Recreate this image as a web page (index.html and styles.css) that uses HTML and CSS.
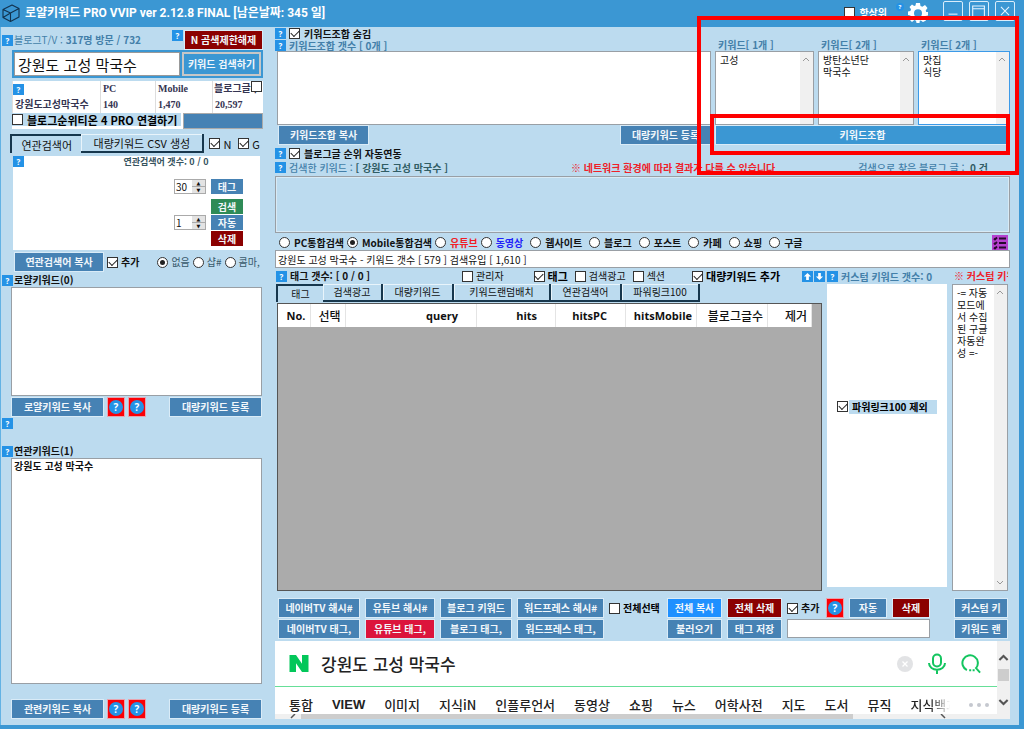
FILE: index.html
```html
<!DOCTYPE html>
<html lang="ko">
<head>
<meta charset="utf-8">
<title>로얄키워드 PRO VVIP</title>
<link rel="stylesheet" href="styles.css">
</head>
<body>
<header class="titlebar">
  <svg class="logo" viewBox="0 0 18 18" fill="none" stroke="#12324d" stroke-width="1.1" stroke-linejoin="round"><path d="M1 5.500 10 1l7 3.500v8.500L8.500 17.500 1 13.500zM1 5.500l7.500 3.500L17 4.500M8.500 9v8.500M1 13.500 8.500 9"/></svg>
  <h1 class="title">로얄키워드 PRO VVIP ver 2.12.8 FINAL [남은날짜: 345 일]</h1>
  <label class="check ontop"><input type="checkbox"> 항상위</label>
  <button class="help round">?</button>
  <button class="gear" aria-label="설정"><svg viewBox="0 0 20 20"><path fill="#fff" fill-rule="evenodd" d="M8 0h4l.5 3 1.800.8L17 2l2.500 3-1.800 2.500.5 1.500H20v3.500l-2.500.5-.8 1.800L18 17.500 15 19l-2.200-1.600-1 .4L11.500 20h-3l-.5-2.300-1.600-.6L4 19l-2.500-2.500L3 14l-.6-1.500L0 12V8.500L2.400 8 3 6.300 1.500 4 4 1.500l2.200 1.400L7.500 2.500zM10 6.200a4 4 0 1 0 0 8 4 4 0 0 0 0-8z"/></svg></button>
  <div class="window-buttons">
    <button aria-label="최소화"><svg viewBox="0 0 20 20"><path d="M5 13.500h10"/></svg></button>
    <button aria-label="최대화"><svg viewBox="0 0 20 20"><path d="M3 4.500h13v12H3zM3 7.500h13"/></svg></button>
    <button aria-label="닫기"><svg viewBox="0 0 20 20"><path d="M5.500 5.500l9 9M14.500 5.500l-9 9"/></svg></button>
  </div>
</header>

<main class="workspace">
  <aside class="side">
    <div class="visits">
      <button class="help">?</button>
      <span class="blue">블로그T/V : <b>317명 방문 / 732</b></span>
      <button class="help raise">?</button>
      <button class="btn dark">N 곰색제한해제</button>
    </div>
    <form class="search">
      <input class="search-text" type="text" value="강원도 고성 막국수" aria-label="키워드">
      <button type="button" class="btn bright">키워드 검색하기</button>
    </form>
    <section class="stats">
      <table>
        <tr><th><button class="help">?</button></th><th>PC</th><th>Mobile</th><th>블로그글수</th></tr>
        <tr><td>강원도고성막국수</td><td>140</td><td>1,470</td><td>20,597</td></tr>
      </table>
      <input class="stats-check" type="checkbox" aria-label="블로그글수">
      <div class="connect">
        <label class="check"><input type="checkbox"> 블로그순위티온 4 PRO 연결하기</label>
        <button class="btn" aria-label="연결"></button>
      </div>
    </section>
    <div class="side-tabs">
      <button class="tab on">연관검색어</button>
      <button class="tab">대량키워드 CSV 생성</button>
      <label class="check light"><input type="checkbox" checked> N</label>
      <label class="check light"><input type="checkbox" checked> G</label>
    </div>
    <section class="related">
      <div class="related-head"><button class="help">?</button><span>연관검색어 갯수: 0 / 0</span></div>
      <div class="related-controls">
        <div class="stepper"><input type="text" value="30" aria-label="태그 수"><span><button aria-label="증가">▲</button><button aria-label="감소">▼</button></span></div>
        <button class="btn">태그</button>
        <button class="btn green second">검색</button>
        <div class="stepper"><input type="text" value="1" aria-label="자동 수"><span><button aria-label="증가">▲</button><button aria-label="감소">▼</button></span></div>
        <button class="btn">자동</button>
        <button class="btn dark second">삭제</button>
      </div>
    </section>
    <div class="related-foot">
      <button class="btn">연관검색어 복사</button>
      <label class="check"><input type="checkbox" checked> 추가</label>
      <label class="check soft"><input type="radio" name="sep" checked> 없음</label>
      <label class="check soft"><input type="radio" name="sep"> 샵#</label>
      <label class="check soft"><input type="radio" name="sep"> 콤마,</label>
    </div>
    <div class="caption"><button class="help">?</button><label for="royal">로얄키워드(0)</label></div>
    <textarea class="list small" id="royal"></textarea>
    <div class="list-foot">
      <button class="btn">로얄키워드 복사</button>
      <button class="info"><i>?</i></button><button class="info"><i>?</i></button>
      <button class="btn last">대량키워드 등록</button>
    </div>
    <div class="caption"><button class="help">?</button></div>
    <div class="caption spaced"><button class="help">?</button><label for="rel">연관키워드(1)</label></div>
    <textarea class="list large" id="rel">강원도 고성 막국수</textarea>
    <div class="list-foot final">
      <button class="btn">관련키워드 복사</button>
      <button class="info"><i>?</i></button><button class="info"><i>?</i></button>
      <button class="btn last">대량키워드 등록</button>
    </div>
  </aside>

  <section class="content">
    <div class="combo">
      <div class="combo-head">
        <div class="line"><button class="help">?</button><label class="check"><input type="checkbox" checked> 키워드조합 숨김</label></div>
        <div class="line blue"><button class="help">?</button><span>키워드조합 갯수 [ 0개 ]</span></div>
      </div>
      <label class="blue" for="k1">키워드[ 1개 ]</label>
      <label class="blue" for="k2">키워드[ 2개 ]</label>
      <label class="blue" for="k3">키워드[ 2개 ]</label>
      <textarea class="box" aria-label="키워드조합"></textarea>
      <div class="box scrolled"><textarea id="k1">고성</textarea><span class="track"><svg viewBox="0 0 8 5"><path d="M1 4l3-3 3 3"/></svg></span></div>
      <div class="box scrolled"><textarea id="k2">방탄소년단
막국수</textarea><span class="track"><svg viewBox="0 0 8 5"><path d="M1 4l3-3 3 3"/></svg></span></div>
      <div class="box scrolled active"><textarea id="k3">맛집
식당</textarea><span class="track"><svg viewBox="0 0 8 5"><path d="M1 4l3-3 3 3"/></svg></span></div>
      <div class="combo-actions"><button class="btn">키워드조합 복사</button><button class="btn">대량키워드 등록</button></div>
      <button class="btn bright combine">키워드조합</button>
    </div>
    <div class="line ranking"><button class="help">?</button><label class="check"><input type="checkbox" checked> 블로그글 순위 자동연동</label></div>
    <div class="line found">
      <button class="help">?</button>
      <span class="blue">검색한 키워드 : <b class="teal">[ 강원도 고성 막국수 ]</b></span>
      <strong class="warn">※ 네트워크 환경에 따라 결과가 다를 수 있습니다</strong>
      <span class="blue">검색으로 찾은 블로그 글 : &nbsp;<b class="teal">0 건</b></span>
    </div>
    <div class="panel"></div>
    <div class="sources">
      <label class="check"><input type="radio" name="src"> PC통합검색</label>
      <label class="check"><input type="radio" name="src" checked> Mobile통합검색</label>
      <label class="check red"><input type="radio" name="src"> 유튜브</label>
      <label class="check vivid"><input type="radio" name="src"> 동영상</label>
      <label class="check"><input type="radio" name="src"> 웹사이트</label>
      <label class="check"><input type="radio" name="src"> 블로그</label>
      <label class="check"><input type="radio" name="src"> 포스트</label>
      <label class="check"><input type="radio" name="src"> 카페</label>
      <label class="check"><input type="radio" name="src"> 쇼핑</label>
      <label class="check"><input type="radio" name="src"> 구글</label>
      <button class="checklist" aria-label="목록"><svg viewBox="0 0 16 16"><path d="M7 3.500h7M7 8h7M7 12.500h7M2 3.500l1 1L5 2.500M2 8l1 1 2-2M2 12.500l1 1 2-2"/></svg></button>
    </div>
    <input class="result" type="text" aria-label="결과" value="강원도 고성 막국수 - 키워드 갯수 [ 579 ] 검색유입 [ 1,610 ]">

    <div class="lower">
      <section class="tags">
        <div class="tags-head">
          <button class="help">?</button><b class="count">태그 갯수: [ 0 / 0 ]</b>
          <label class="check light"><input type="checkbox"> 관리자</label>
          <label class="check heavy"><input type="checkbox" checked> 태그</label>
          <label class="check light"><input type="checkbox"> 검색광고</label>
          <label class="check light"><input type="checkbox"> 섹션</label>
          <label class="check heavy"><input type="checkbox" checked> 대량키워드 추가</label>
          <span class="arrows"><button class="help" aria-label="위로"><svg viewBox="0 0 10 10"><path d="M5 1l4 4H6.500v4h-3V5H1z"/></svg></button><button class="help" aria-label="아래로"><svg viewBox="0 0 10 10"><path d="M5 9l4-4H6.500V1h-3v4H1z"/></svg></button></span>
        </div>
        <div class="tag-tabs">
          <button class="tab on">태그</button><button class="tab">검색광고</button><button class="tab">대량키워드</button><button class="tab">키워드랜덤배치</button><button class="tab">연관검색어</button><button class="tab">파워링크100</button>
        </div>
        <div class="grid">
          <table>
            <colgroup><col class="c1"><col class="c2"><col class="c3"><col class="c4"><col class="c5"><col class="c6"><col class="c7"><col class="c8"></colgroup>
            <tr><th>No.</th><th class="ko">선택</th><th class="wide">query</th><th class="wide">hits</th><th class="wide">hitsPC</th><th>hitsMobile</th><th class="ko">블로그글수</th><th class="ko">제거</th></tr>
          </table>
        </div>
      </section>
      <section class="custom">
        <div class="line blue"><button class="help">?</button><span>커스텀 키워드 갯수: 0</span></div>
        <div class="custom-list"><label class="check heavy"><input type="checkbox" checked> 파워링크100 제외</label></div>
      </section>
      <section class="auto">
        <strong class="warn">※ 커스텀 키워드</strong>
        <div class="box scrolled"><textarea aria-label="커스텀">-= 자동
모드에
서 수집
된 구글
자동완
성 =-</textarea><span class="track"><svg viewBox="0 0 8 5"><path d="M1 4l3-3 3 3"/></svg><svg viewBox="0 0 8 5"><path d="M1 1l3 3 3-3"/></svg></span></div>
      </section>
    </div>

    <div class="actions">
      <button class="btn">네이버TV 해시#</button>
      <button class="btn">유튜브 해시#</button>
      <button class="btn">블로그 키워드</button>
      <button class="btn">워드프레스 해시#</button>
      <label class="check heavy"><input type="checkbox"> 전체선택</label>
      <button class="btn azure">전체 복사</button>
      <button class="btn dark">전체 삭제</button>
      <div class="mini">
        <label class="check"><input type="checkbox" checked> 추가</label>
        <button class="info"><i>?</i></button>
        <button class="btn">자동</button>
        <button class="btn dark">삭제</button>
      </div>
      <button class="btn edge">커스텀 키</button>
      <button class="btn">네이버TV 태그,</button>
      <button class="btn crimson">유튜브 태그,</button>
      <button class="btn">블로그 태그,</button>
      <button class="btn">워드프레스 태그,</button>
      <span></span>
      <button class="btn">불러오기</button>
      <button class="btn">태그 저장</button>
      <input class="save-name" type="text" aria-label="태그 이름">
      <button class="btn edge">키워드 랜</button>
    </div>

    <section class="browser">
      <div class="page">
        <div class="naver">
          <svg class="n-logo" viewBox="0 0 19 17"><path fill="#03c75a" d="M0 0h6.500l6 8.800V0H19v17h-6.500l-6-8.800V17H0z"/></svg>
          <span class="query">강원도 고성 막국수</span>
          <button class="clear" aria-label="지우기"><svg viewBox="0 0 16 16"><circle cx="8" cy="8" r="8" fill="#e2e3e5"/><path d="M5.500 5.500l5 5M10.500 5.500l-5 5" stroke="#fff" stroke-width="1.300"/></svg></button>
          <button aria-label="음성"><svg viewBox="0 0 20 22" fill="none" stroke="#13c55f" stroke-width="2"><rect x="6" y="1.500" width="8" height="12" rx="4"/><path d="M2 10c0 9 16 9 16 0M10 17v4"/></svg></button>
          <button aria-label="검색"><svg viewBox="0 0 22 22" fill="none" stroke="#13c55f" stroke-width="2.200"><path d="M6.500 17.700A8.500 8.500 0 1 1 16.500 15.500L21 20.500"/><path d="M9 18h2.200M12.800 18H15"/></svg></button>
        </div>
        <nav class="naver-tabs">
          <a href="#">통합</a><a href="#" class="latin">VIEW</a><a href="#">이미지</a><a href="#">지식iN</a><a href="#">인플루언서</a><a href="#">동영상</a><a href="#">쇼핑</a><a href="#">뉴스</a><a href="#">어학사전</a><a href="#">지도</a><a href="#">도서</a><a href="#">뮤직</a><a href="#" class="fade">지식백과</a><span class="dots"><i></i><i></i><i></i></span>
        </nav>
        <div class="hbar"><svg viewBox="0 0 8 5"><path d="M6 0L2 4"/></svg><span></span><svg viewBox="0 0 8 5"><path d="M2 0l4 4"/></svg></div>
      </div>
      <div class="vbar"><svg viewBox="0 0 8 5"><path d="M1 4l3-3 3 3"/></svg><span></span><svg viewBox="0 0 8 5"><path d="M1 1l3 3 3-3"/></svg></div>
    </section>
  </section>
</main>
<div class="mark outer"></div>
<div class="mark inner"></div>
</body>
</html>
```

FILE: styles.css
```css
* { box-sizing: border-box; }
body {
  margin: 0;
  min-height: 100vh;
  position: relative;
  display: flex;
  flex-direction: column;
  overflow-x: hidden;
  background: #bcdbef;
  color: #111;
  font: 10px/12px "Noto Sans CJK KR", sans-serif;
}
button, input, textarea { font: inherit; color: inherit; margin: 0; padding: 0; border: 0; border-radius: 0; }
button { background: none; white-space: nowrap; }
textarea { resize: none; display: block; overflow: hidden; }
svg { display: block; }

.titlebar { display: flex; height: 27px; padding: 0 9px 5px 2px; align-items: center; background: #3b97d3; color: #fff; }
.logo { width: 18px; height: 18px; margin: 3px 5px 0 0; }
.title { margin: 3px auto 0 0; font: 700 12px/18px Roboto, "Noto Sans CJK KR", sans-serif; white-space: nowrap; }
.ontop { margin: 3px 9px 0 0; }
.help { flex: none; width: 11px; height: 11px; background: #2492e6; color: #fff; font: 700 8px/11px "Open Sans", sans-serif; text-align: center; }
.help.round { width: 8px; height: 8px; border-radius: 4px; font-size: 6px; line-height: 8px; align-self: flex-start; margin: 3px 4px 0 0; }
.gear { width: 20px; height: 20px; margin: 3px 15px 0 0; }
.window-buttons { display: flex; gap: 6px; }
.window-buttons button { width: 20px; height: 20px; border: 1px solid #d9edfb; border-radius: 2px; }
.window-buttons path { fill: none; stroke: #e6f4ff; stroke-width: 1.200; }

.workspace { flex: 1; display: grid; grid-template-columns: 275px minmax(0, 1fr); border: solid #3b97d3; border-width: 0 5px 4px 0; box-shadow: inset 1px 0 #62b2e4; }
.side { display: flex; flex-direction: column; padding: 3px 13px 6px 2px; }
.content { display: flex; flex-direction: column; padding: 1px 9px 6px 0; min-width: 0; }

.check { display: inline-flex; align-items: center; gap: 4px; font-weight: 700; white-space: nowrap; }
.check.light { font-weight: 400; font-size: 11px; gap: 3px; }
.check.heavy { color: #000; }
.check.soft { color: #38596b; font-weight: 400; }
input[type=checkbox], input[type=radio] { appearance: none; flex: none; display: grid; place-items: center; width: 11px; height: 11px; background: #fff; border: 1px solid #333; }
input[type=radio] { border-radius: 50%; }
input[type=radio]:checked::after { content: ""; width: 5px; height: 5px; border-radius: 50%; background: #222; }
input[type=checkbox]:checked::after { content: ""; width: 7px; height: 4px; border: solid #222; border-width: 0 0 1px 1px; transform: rotate(-45deg); margin-bottom: 2px; }
.blue { color: #437fa9; font-weight: 700; }
.teal { color: #315d65; }
.warn { color: #ef2029; white-space: nowrap; }
.red { color: #f11d25; }
.vivid { color: #2222fa; }

.btn { height: 20px; background: #4682b4; border: 1px solid #d9ebf7; color: #f2f7fb; font-weight: 700; text-align: center; overflow: hidden; line-height: 16px; }
.btn.dark { background: #8b0000; }
.btn.green { background: #2e8b57; }
.btn.azure { background: #1e90ff; }
.btn.crimson { background: #dc143c; }
.btn.bright { background: #3b97d3; }
.info { width: 18px; height: 20px; background: #fb0006; border: 1px solid #e8a3ae; display: grid; place-items: center; }
.info i { width: 14px; height: 14px; border-radius: 50%; background: #2492e6; color: #fff; font: 700 10px/14px "Open Sans", sans-serif; }

.visits { display: grid; grid-template-columns: 11px 1fr 11px 79px; gap: 1px; align-items: center; margin-right: -1px; }
.visits .blue { font-weight: 400; white-space: nowrap; }
.visits .raise { align-self: start; }
.search { display: grid; grid-template-columns: 1fr 79px; gap: 2px; margin: 0 -1px 3px 10px; padding: 2px; height: 28px; background: #3b97d3; }
.search-text { min-width: 0; padding: 0 3px; background: #fff; border: 1px solid #999; font-size: 15px; }
.search .btn { height: 24px; border: 2px solid #c7c7c7; }
.stats { position: relative; margin: 0 -1px 5px 10px; background: #fff; }
.stats table { width: 100%; height: 32px; table-layout: fixed; border-collapse: collapse; font-family: "Liberation Serif", "Noto Sans CJK KR", serif; color: #353552; }
.stats th, .stats td { padding: 0 0 0 2px; text-align: left; font-weight: 700; line-height: 12px; white-space: nowrap; border-left: 1px solid #ddd; }
.stats th { height: 16px; }
.stats th:first-child { width: 88px; padding: 0; }
.stats th:nth-child(2) { width: 55px; }
.stats th:nth-child(3) { width: 57px; }
.stats th:nth-child(4) { padding-left: 1px; }
.stats th .help { display: block; }
.stats-check { position: absolute; top: 0; right: 1px; }
.connect { display: grid; grid-template-columns: 1fr 80px; gap: 2px; }
.connect .check { font-size: 11px; height: 13px; background: #bcdbef; color: #000; }
.connect .btn { height: 16px; border-color: #aaa; }
.side-tabs { display: flex; align-items: center; margin: 0 0 3px 8px; }
.tab { height: 19px; line-height: 16px; border: solid #17374d; border-width: 0 2px 2px 0; box-shadow: inset 1px 1px #e8f4fb; }
.tab.on { border-width: 2px 0 0 2px; box-shadow: none; }
.side-tabs .tab { width: 124px; font-size: 11px; }
.side-tabs .tab.on { width: 72px; }
.side-tabs .check { margin-left: 5px; width: 24px; }
.related { margin: 0 2px 2px 11px; padding-bottom: 4px; background: #fff; }
.related-head { display: flex; color: #36535e; font-weight: 700; font-size: 9px; }
.related-head span { margin: 0 auto; padding-left: 48px; }
.related-controls { display: grid; grid-template-columns: 32px 32px; justify-content: end; gap: 1px 5px; padding: 11px 17px 0 0; }
.related-controls .btn { height: 15px; border: 0; line-height: 14px; }
.related-controls .second { grid-column: 2; }
.related-controls .green { margin-top: 4px; }
.stepper { display: grid; grid-template-columns: 1fr 13px; height: 15px; background: #fff; border: 1px solid #aaa; }
.stepper input { min-width: 0; width: 100%; height: 13px; padding-left: 1px; background: #fff; }
.stepper span { display: grid; }
.stepper button { background: #e3e3e3; border-bottom: 1px solid #aaa; font: 5px/6px "DejaVu Sans", sans-serif; }
.related-foot { display: flex; align-items: center; gap: 3px; margin: 0 0 1px 12px; }
.related-foot .btn { width: 90px; }
.related-foot .check { gap: 3px; }
.related-foot .check:nth-child(3) { margin-left: 15px; }
.caption { display: flex; align-items: center; gap: 1px; font-weight: 700; line-height: 14px; }
.caption.spaced { margin-top: 15px; }
.list { margin: 0 0 1px 9px; padding: 1px 2px; background: #fff; border: 1px solid #999fa5; font-weight: 700; }
.list.small { flex: 107 1 0px; }
.list.large { flex: 226 1 0px; }
.list-foot { display: flex; gap: 3px; margin: 0 0 1px 9px; }
.list-foot .btn { width: 93px; }
.list-foot .last { margin-left: auto; }
.list-foot.final { margin-top: 14px; margin-bottom: 0; }

.line { display: flex; align-items: center; gap: 3px; height: 11px; line-height: 11px; white-space: nowrap; }
.line label { line-height: 11px; }
.combo { display: grid; grid-template-columns: minmax(0, 1fr) 99px 96px 92px; column-gap: 4px; }
.combo-head { display: grid; gap: 1px; }
.combo > label { align-self: end; padding-left: 3px; }
.box { background: #fff; border: 1px solid #999fa5; }
.combo > .box { height: 74px; }
.combo > textarea.box { width: auto; margin: 0 0 0 2px; }
.scrolled { display: flex; }
.scrolled textarea { flex: 1; min-width: 0; padding: 2px 4px; background: none; }
.active { border-color: #3c9ae8; }
.track { width: 13px; padding: 5px 2px; background: #f0f0f0; display: flex; flex-direction: column; justify-content: space-between; }
.track svg, .vbar svg, .hbar svg { width: 8px; height: 5px; fill: none; stroke: #999; }
.combo-actions { display: flex; justify-content: space-between; padding-left: 3px; }
.combo-actions .btn { width: 91px; }
.combine { grid-column: 2 / -1; }
.ranking { margin-top: 3px; }
.found { margin: 3px 0; }
.found .blue { font-weight: 500; }
.found .warn { margin-left: auto; }
.found .blue:last-child { margin: 0 22px 0 80px; }
.panel { height: 57px; border: 1px solid #999fa5; box-shadow: inset 0 0 0 1px #d8eaf5; }
.sources { display: flex; align-items: center; gap: 7px; height: 17px; padding: 2px 2px 0 4px; }
.sources .check:nth-child(-n+3) { margin-right: -4px; }
.checklist { width: 16px; height: 15px; margin-left: auto; background: #b541ce; }
.checklist path { fill: none; stroke: #260a2c; stroke-width: 1.800; }
.result { height: 18px; padding: 0 2px; background: #fff; border: 1px solid #999fa5; }
.lower { flex: 1; display: grid; grid-template-columns: minmax(0, 1fr) 120px 56px; gap: 5px; padding: 2px 2px 0 1px; }
.tags, .custom, .auto { display: flex; flex-direction: column; min-width: 0; }
.tags-head { display: flex; align-items: center; height: 12px; gap: 7px; }
.tags-head .check { gap: 3px; }
.tags-head .light { font-size: 10px; }
.tags-head .heavy { font-size: 11px; }
.count { margin: 0 auto 0 -4px; }
.tags-head .check:nth-of-type(1) { margin-right: 23px; }
.tags-head .check:last-of-type { margin-left: 20px; }
.arrows { display: flex; gap: 1px; margin: 0 -3px 0 15px; }
.arrows svg { width: 9px; height: 9px; margin: 1px; fill: #fff; }
.tag-tabs { display: flex; margin: 2px 0 1px; }
.tag-tabs .tab { width: 71px; height: 18px; font-size: 10px; }
.tag-tabs .tab:nth-child(1) { width: 47px; }
.tag-tabs .tab:nth-child(2) { width: 60px; }
.tag-tabs .tab:nth-child(4) { width: 97px; }
.tag-tabs .tab:nth-child(6) { width: 78px; }
.grid { flex: 1; margin-left: 1px; padding-right: 9px; background: #ababab; border: 1px solid #555; }
.grid table { width: 100%; height: 23px; table-layout: fixed; border-collapse: collapse; background: #fff; }
.grid th { padding: 0 4px; font: 700 11px/16px "Open Sans", sans-serif; text-align: right; border-right: 1px solid #e4e4e4; white-space: nowrap; }
.grid .wide { padding-right: 18px; }
.grid .ko { font: 500 12px/16px "Noto Sans CJK KR", sans-serif; }
.c1 { width: 32px; } .c2 { width: 35px; } .c4 { width: 79px; } .c5 { width: 70px; } .c6 { width: 71px; } .c7 { width: 71px; } .c8 { width: 44px; }
.custom .line, .auto .warn { height: 12px; overflow: hidden; margin-bottom: 2px; }
.custom-list { flex: 1; display: grid; grid-template-rows: 3fr 4fr; align-items: end; margin-bottom: 4px; padding: 0 10px; background: #fff; }
.custom-list .check { padding: 1px 0; gap: 4px; background: linear-gradient(90deg, #fff 12px, #bcdbef 12px); }
.auto .box { flex: 1; }
.auto .warn { padding-left: 2px; }

.actions { display: grid; grid-template-columns: 82px 70px 72px 87px 53px 55px 55px 143px minmax(54px, 1fr); gap: 1px 5px; margin: 7px 2px 2px 3px; }
.actions .check { gap: 3px; }
.mini { display: flex; align-items: center; gap: 5px; }
.mini .check { margin-right: auto; }
.mini .btn { width: 38px; }
.edge { width: 54px; justify-self: end; }
.save-name { height: 19px; width: 100%; background: #fff; border: 1px solid #999fa5; }

.browser { display: flex; height: 78px; background: #fff; }
.page { flex: 1; min-width: 0; display: flex; flex-direction: column; }
.naver { display: flex; align-items: center; gap: 14px; height: 46px; padding: 0 16px 0 14px; border-bottom: 1px solid #66df98; }
.n-logo { width: 20px; height: 17px; }
.query { flex: 1; margin-left: -2px; font-size: 17px; line-height: 24px; font-weight: 500; color: #222; }
.naver button { width: 20px; height: 22px; }
.naver .clear { width: 16px; height: 16px; }
.naver-tabs { display: flex; align-items: center; gap: 19px; flex: 1; padding: 8px 8px 0 14px; overflow: hidden; }
.naver-tabs a { color: #222; text-decoration: none; font-size: 13px; line-height: 18px; font-weight: 500; white-space: nowrap; }
.naver-tabs .latin { font: 700 13px/18px "Liberation Sans", sans-serif; }
.naver-tabs .fade { width: 42px; overflow: hidden; color: transparent; background: linear-gradient(90deg, #222 50%, #fff); background-clip: text; margin-right: auto; }
.dots { display: flex; gap: 4px; }
.dots i { width: 4px; height: 4px; border-radius: 2px; background: #c5c8cf; }
.hbar { display: flex; justify-content: space-between; height: 5px; padding: 0 50px 0 14px; background: #f0f0f0; }
.hbar svg, .vbar svg { stroke: #555; stroke-width: 1.500; }
.hbar span { flex: 1; margin: 0 86px 0 4px; background: #cdcdcd; }
.vbar { width: 13px; display: flex; flex-direction: column; align-items: center; background: #f0f0f0; padding: 13px 1px; }
.vbar span { width: 11px; height: 12px; margin: 7px 0 auto; background: #cdcdcd; }
.vbar svg { width: 11px; height: 8px; }

.mark { position: absolute; border: 4px solid #fe0000; pointer-events: none; }
.outer { top: 16px; right: 5px; width: 322px; height: 159px; }
.inner { top: 114px; right: 14px; width: 300px; height: 41px; }
```
